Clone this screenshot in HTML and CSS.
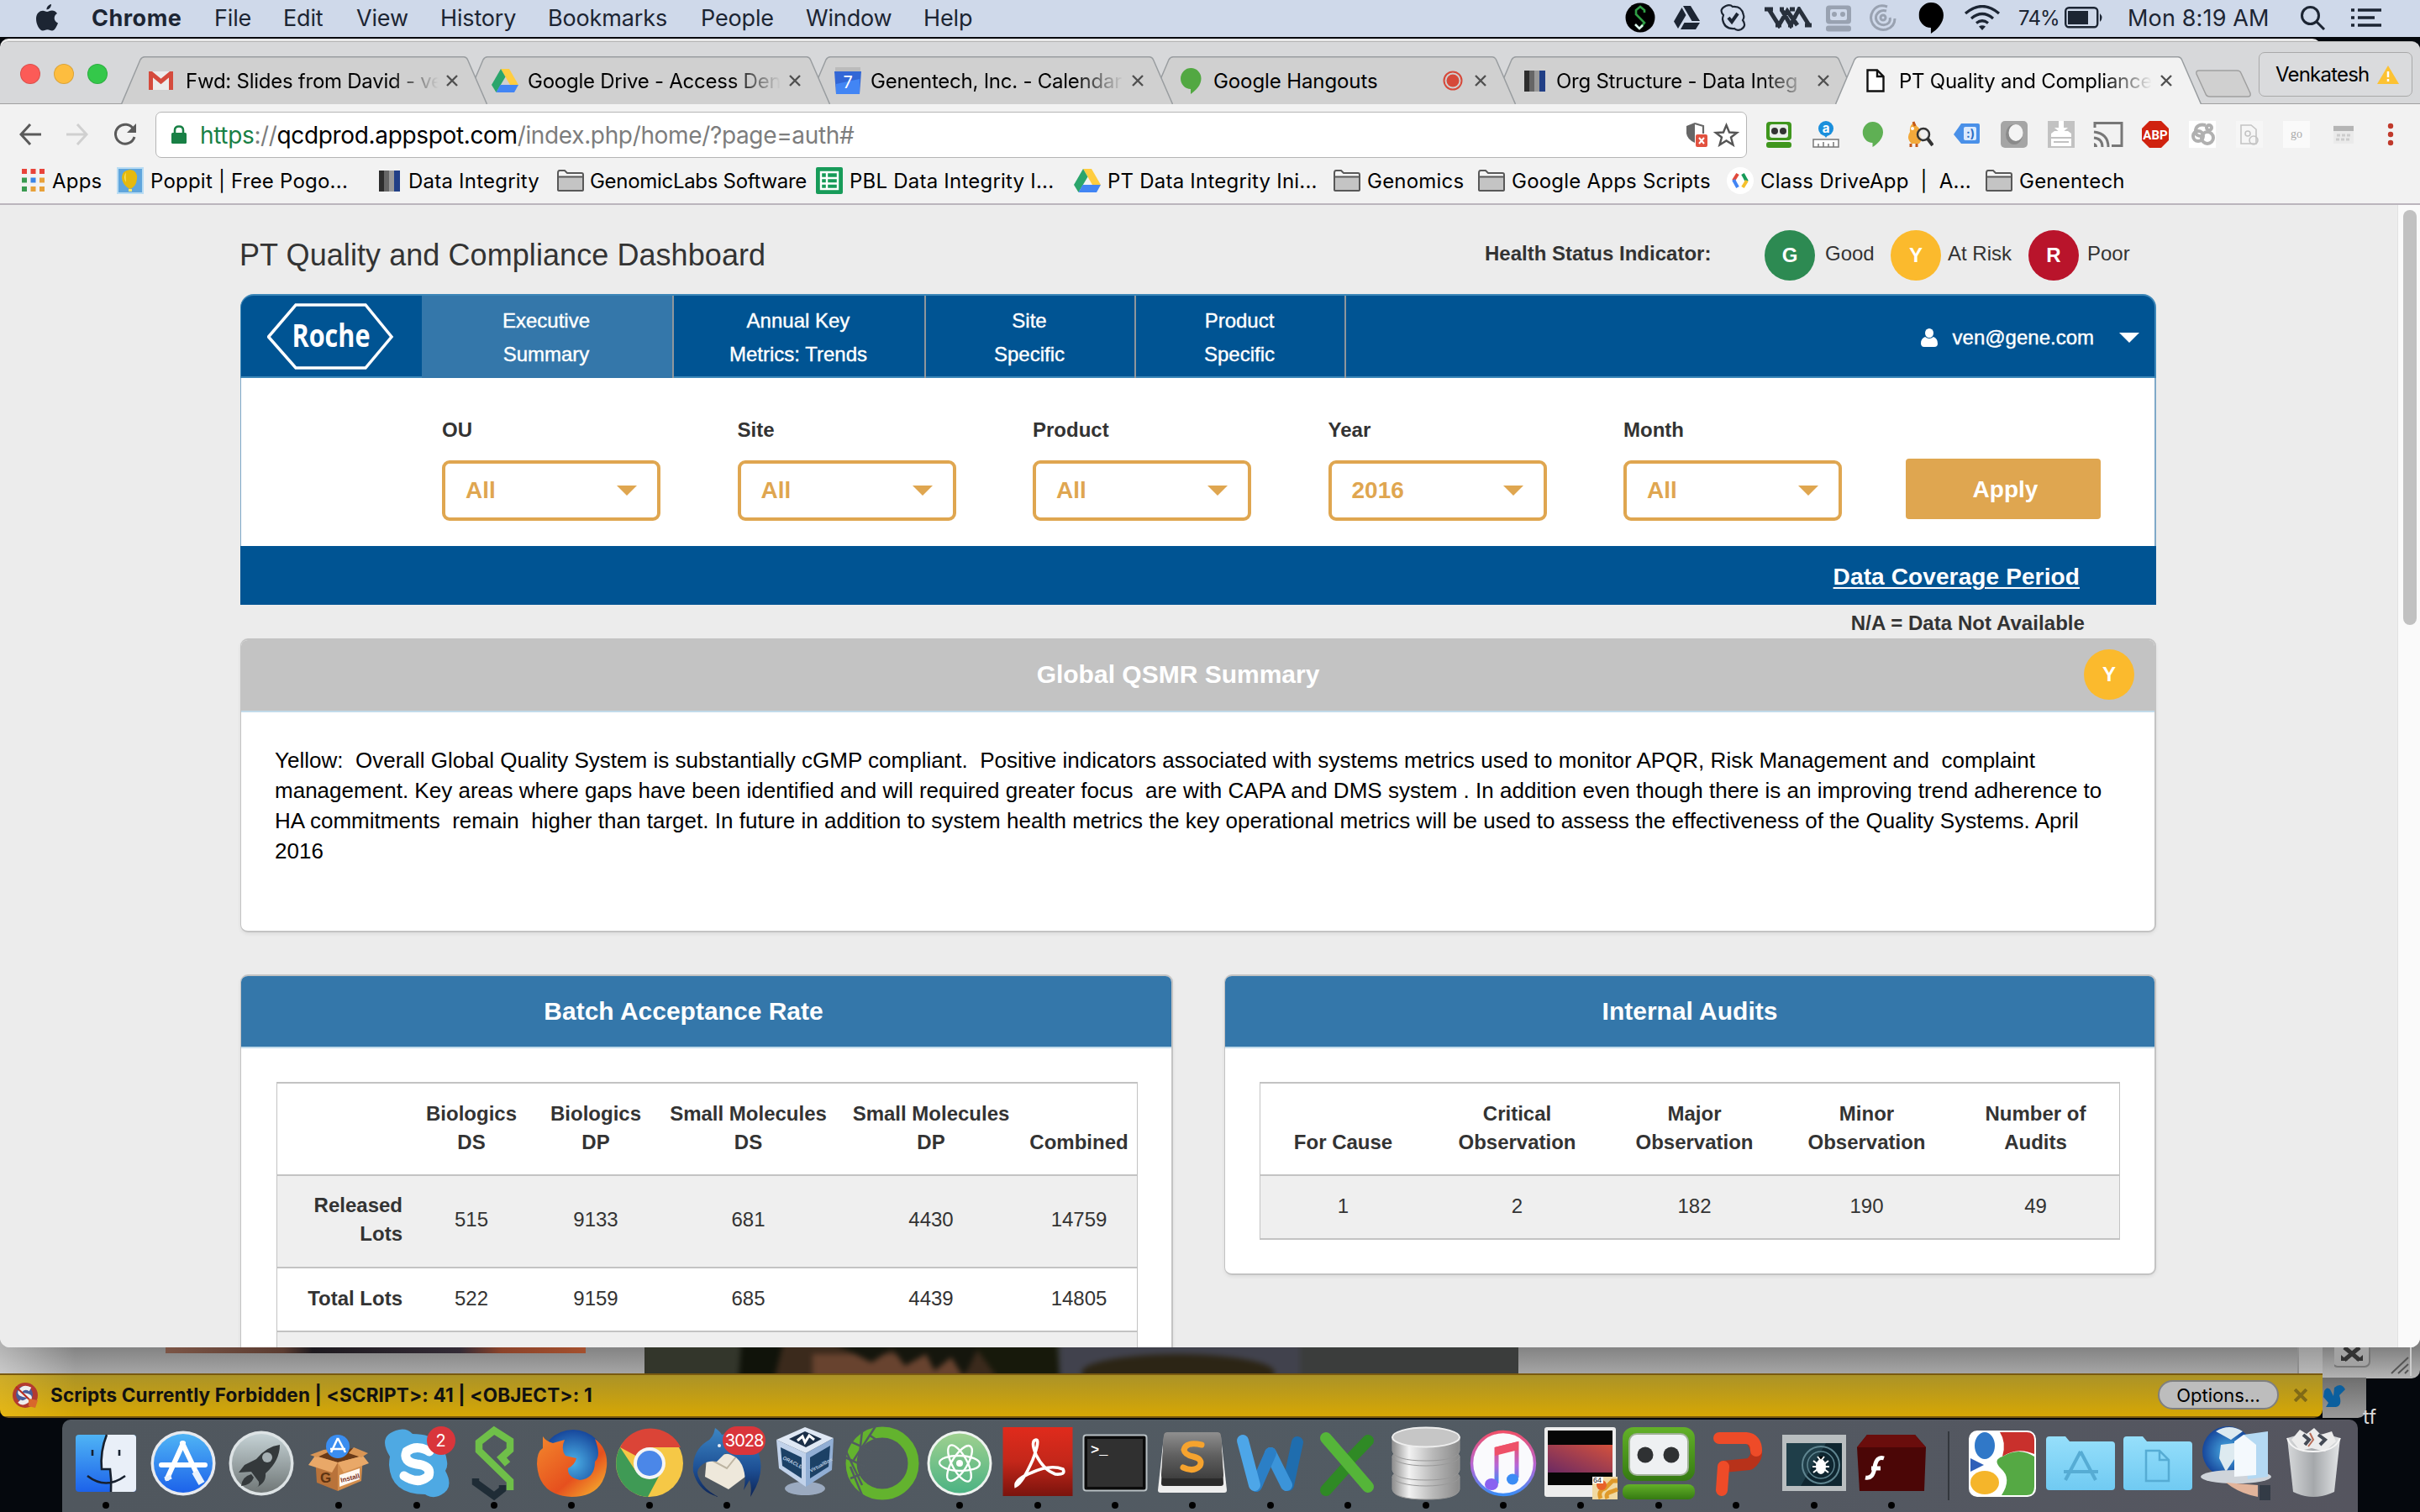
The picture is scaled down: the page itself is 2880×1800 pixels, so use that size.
FILE: index.html
```html
<!DOCTYPE html>
<html lang="en">
<head>
<meta charset="utf-8">
<title>PT Quality and Compliance Dashboard</title>
<link rel="stylesheet" href="styles.css">
</head>
<body>
<svg class="defs" width="0" height="0" aria-hidden="true">
  <defs>
    <linearGradient id="gBlue" x1="0" y1="0" x2="0" y2="1"><stop offset="0" stop-color="#4fb4f5"/><stop offset="1" stop-color="#1c62ea"/></linearGradient>
    <linearGradient id="gSilver" x1="0" y1="0" x2="0" y2="1"><stop offset="0" stop-color="#c5d2d5"/><stop offset="1" stop-color="#707777"/></linearGradient>
    <linearGradient id="gRed" x1="0" y1="0" x2="0" y2="1"><stop offset="0" stop-color="#e02b1c"/><stop offset=".5" stop-color="#c4271a"/><stop offset="1" stop-color="#7a130d"/></linearGradient>
    <linearGradient id="gAtom" x1="0" y1="0" x2="0" y2="1"><stop offset="0" stop-color="#9ed08f"/><stop offset="1" stop-color="#4cb383"/></linearGradient>
    <linearGradient id="gSub" x1="0" y1="0" x2="0" y2="1"><stop offset="0" stop-color="#8f8f8f"/><stop offset=".5" stop-color="#606060"/><stop offset="1" stop-color="#3f3f3f"/></linearGradient>
    <linearGradient id="gCyl" x1="0" y1="0" x2="1" y2="0"><stop offset="0" stop-color="#8d8d8d"/><stop offset=".25" stop-color="#f2f2f2"/><stop offset=".6" stop-color="#b9b9b9"/><stop offset="1" stop-color="#8a8a8a"/></linearGradient>
    <linearGradient id="gFolder" x1="0" y1="0" x2="0" y2="1"><stop offset="0" stop-color="#96dffb"/><stop offset="1" stop-color="#70caf2"/></linearGradient>
    <linearGradient id="gNote" x1="0" y1="0" x2="0" y2="1"><stop offset="0" stop-color="#f0506a"/><stop offset=".55" stop-color="#b566d8"/><stop offset="1" stop-color="#3b8cf5"/></linearGradient>
    <linearGradient id="gUbuntu" x1="0" y1="1" x2="1" y2="0"><stop offset="0" stop-color="#6b2a63"/><stop offset="1" stop-color="#d4513c"/></linearGradient>
    <linearGradient id="gGreen" x1="0" y1="0" x2="0" y2="1"><stop offset="0" stop-color="#63b128"/><stop offset="1" stop-color="#357a12"/></linearGradient>
    <linearGradient id="gFox" x1="0" y1="0" x2="1" y2="1"><stop offset="0" stop-color="#f3872c"/><stop offset=".6" stop-color="#e6501e"/><stop offset="1" stop-color="#f8c232"/></linearGradient>
    <linearGradient id="gBird" x1="0" y1="0" x2="0" y2="1"><stop offset="0" stop-color="#3c86c4"/><stop offset=".6" stop-color="#1d4f94"/><stop offset="1" stop-color="#0d2456"/></linearGradient>
    <radialGradient id="gGlobe"><stop offset="0" stop-color="#4bb0e6"/><stop offset="1" stop-color="#17479c"/></radialGradient>
    <linearGradient id="gTrash" x1="0" y1="0" x2="1" y2="0"><stop offset="0" stop-color="#d6d8da"/><stop offset=".5" stop-color="#a5a8ab"/><stop offset="1" stop-color="#e2e4e6"/></linearGradient>
    <symbol id="folder" viewBox="0 0 32 26"><path d="M1 24V4Q1 1 3 1H9L12 4H29Q31 4 31 6V24Q31 25 29 25H3Q1 25 1 24Z" fill="#f4f4f4" stroke="#585858" stroke-width="2"/><path d="M2 9H30V24H2Z" fill="#c4c4c4"/><path d="M1 8.500H31" stroke="#585858" stroke-width="2"/></symbol>
    <symbol id="drive" viewBox="0 0 32 28"><path d="M11 0H21L32 19H22Z" fill="#ffcd40"/><path d="M11 0L16.500 9.500 5.500 28 0 19Z" fill="#2ba56b"/><path d="M10.500 19H32L27 28H5.500Z" fill="#4285f4"/></symbol>
    <symbol id="close" viewBox="0 0 14 14"><path d="M1 1L13 13M13 1L1 13" stroke="#505050" stroke-width="2.400"/></symbol>
    <symbol id="bars" viewBox="0 0 25 25"><path d="M0 0H6V25H0Z" fill="#2d2d2d"/><path d="M6 0H12V25H6Z" fill="#666"/><path d="M12 0H18V25H12Z" fill="#999"/><path d="M18 0H25V25H18Z" fill="#213f86"/></symbol>
    <symbol id="bubble" viewBox="0 0 26 32"><path d="M13 0A12.500 13 0 0 1 25.500 13C25.500 21 19 28 12.500 32V26A12.700 13 0 0 1 13 0Z"/></symbol>
    <symbol id="tabshape" viewBox="0 0 436 57"><path d="M0.500 57L23 4Q25 .8 28 .8H408Q411 .8 412.500 4L435.500 57"/></symbol>
    <symbol id="robo" viewBox="0 0 32 32"><rect x="1" y="1" width="30" height="22" rx="4"/><rect x="1" y="25" width="30" height="7" rx="3"/></symbol>
  </defs>
</svg>

<div class="desktop">
  <header class="menubar">
    <svg class="mi" width="28" height="34" viewBox="0 0 28 34"><path fill="#1c2533" d="M19 1c.2 3-2.500 6.500-5.500 6.500C13.200 4.500 16 1.500 19 1ZM14 10c1.500 0 3-1.500 6-1.500 2 0 4.500 1 6 3.500-5 3-4 9.500 1 11.500-1.500 4-4 9-7 9-2 0-3-1.300-5.500-1.300S10.500 32.500 9 32.500C5 32.500 1 25 1 18.500 1 12 5 8.700 9 8.700c2.300 0 3.800 1.300 5 1.300Z"/></svg>
    <b>Chrome</b><span>File</span><span>Edit</span><span>View</span><span>History</span><span>Bookmarks</span><span>People</span><span>Window</span><span>Help</span>
    <svg width="36" height="36" viewBox="0 0 36 36"><ellipse cx="18" cy="18" rx="17.500" ry="17.500"/><path d="M13 15L13 9 18 5 23 9V12M13 14L23 24 19 29" fill="none" stroke="#2f9e44" stroke-width="2.600"/><path d="M12 26L17 31 21 27" fill="none" stroke="#dfe" stroke-width="2.600"/></svg>
    <svg width="32" height="28" viewBox="0 0 32 28" fill="#1c2533"><path d="M11 0H20L31 18H21.500ZM9.500 2L14.500 11 5 27 0 18.500ZM12.500 20H31L26 28H8Z"/></svg>
    <svg width="33" height="32" viewBox="0 0 33 32" fill="none" stroke="#1c2533" stroke-width="2.200"><path d="M8 2Q13 0 16 3 27 2 29 13 30 16 28 19 33 26 26 30 21 32 18 29 6 30 4 18 4 16 5 13 -1 6 8 2Z"/><path d="M11 16L15 21 22 11" stroke-width="4"/></svg>
    <svg width="56" height="26" viewBox="0 0 56 26" fill="none" stroke="#28303c" stroke-width="5"><path d="M0 3H10M18 3H23M30 3H36M5 3L17 22 27 5 39 22M20 3L31 22 41 3 53 22M13 22H20M28 22H34M48 22H56"/></svg>
    <svg width="32" height="33" viewBox="0 0 32 33" fill="#99a2b1"><use href="#robo"/><rect x="6" y="6" width="20" height="13" rx="2" fill="#cfd9ea"/><circle cx="11" cy="12" r="3"/><circle cx="21" cy="12" r="3"/></svg>
    <svg width="33" height="32" viewBox="0 0 33 32" fill="none" stroke="#99a2b1" stroke-width="3"><path d="M22 3Q11-1 5 8 0 16 5 24 11 32 21 30 31 27 31 17M21 8Q13 6 9 13 7 19 12 23 19 27 24 22 26 19 25 16"/><circle cx="17" cy="16" r="3"/></svg>
    <svg width="31" height="37" viewBox="0 0 26 32"><use href="#bubble"/></svg>
    <svg width="44" height="30" viewBox="0 0 44 30" fill="none" stroke="#1c2533" stroke-width="3.200"><path d="M2 10Q22-7 42 10M9 16Q22 5 35 16M15 21.500Q22 16 29 21.500"/><path d="M18 25.500Q22 23 26 25.500L22 30Z" fill="#1c2533" stroke="none"/></svg>
    <span class="pct">74%</span>
    <svg width="46" height="26" viewBox="0 0 46 26"><rect x="1.200" y="1.200" width="38" height="23" rx="4" fill="none" stroke="#1c2533" stroke-width="2.400"/><path d="M4 5H28V21H4ZM42 8Q47 13 42 18Z" fill="#1c2533"/></svg>
    <span class="clock">Mon 8:19 AM</span>
    <svg width="30" height="29" viewBox="0 0 30 29" fill="none" stroke="#1c2533" stroke-width="3"><circle cx="11.500" cy="11.500" r="10"/><path d="M18.500 18.500L28 28"/></svg>
    <svg width="37" height="22" viewBox="0 0 37 22" stroke="#1c2533" stroke-width="3.600"><path d="M0 2H4M8 2H36M0 11H4M8 11H28M0 20H4M8 20H36"/></svg>
  </header>

  <div class="backwin"></div>

  <section class="ff">
    <div class="ff-page">
      <div class="photo-a"></div>
      <svg class="photo-b" width="1040" height="31" viewBox="0 0 1040 31" preserveAspectRatio="none">
        <rect width="1040" height="31" fill="#31342a"/>
        <g class="soft"><path d="M0 -5H120V36H0Z" fill="#33362b"/><path d="M160 -5H480V36H150Z" fill="#3b2a1c"/><path d="M115 -5H165L155 36H112Z" fill="#10130a"/><path d="M200 8H380L385 36H200Z" fill="#68432f"/><path d="M225 -5H400L380 36 365 12 345 28 335 8 310 22 295 2 270 18Z" fill="#15160d"/><path d="M390 -5H490L494 36H420Z" fill="#17190b"/><path d="M494 -5H820L820 36H494Z" fill="#41424d"/><ellipse cx="635" cy="30" rx="115" ry="22" fill="#2c2515"/><path d="M780 -5H1045V36H780Z" fill="#3b3d3c"/></g>
      </svg>
      <div class="ff-scroll"></div>
    </div>
    <div class="ff-bar">
      <svg width="32" height="32" viewBox="0 0 32 32"><circle cx="16" cy="16" r="15" fill="#b33a30"/><circle cx="15" cy="15" r="10" fill="#4a5c98"/><path d="M22 9Q15 5 11 10T16 16 19 22 9 23" fill="none" stroke="#eee" stroke-width="5"/><path d="M5 6L26 26" stroke="#b8291e" stroke-width="2"/><path d="M20 20L31 22 28 31 20 29Z" fill="#d8682c"/></svg>
      <b>Scripts Currently Forbidden | &lt;SCRIPT&gt;: 41 | &lt;OBJECT&gt;: 1</b>
      <button class="ff-opt">Options...</button>
      <svg class="ff-x" width="16" height="16" viewBox="0 0 14 14"><path d="M1 1L13 13M13 1L1 13" stroke="#806a16" stroke-width="3.500"/></svg>
    </div>
  </section>
  <div class="sidewin"><svg width="100" height="34" viewBox="0 0 100 34"><rect x="-2" y="-12" width="44" height="35" rx="6" fill="#a2a2a2" stroke="#777" stroke-width="2"/><path d="M12 0L30 15M30 0L12 15" stroke="#333" stroke-width="5"/><path d="M8 16V9L16 16ZM34 16V9L26 16Z" fill="#333"/><path d="M68 31L88 12M76 31L88 20M84 31L88 27" stroke="#555" stroke-width="2"/><path d="M91 0V34" stroke="#ccc" stroke-width="2"/></svg></div>
  <div class="notewin"><svg width="30" height="30" viewBox="0 0 30 30"><path d="M2 8Q5 2 9 6L13 14 14 4Q22-3 27 6L20 13Q24 25 16 27H4L7 22 1 15Z" fill="#0b5f9e"/></svg></div>
  <span class="desk-label">tf</span>

  <main class="chrome">
    <div class="tabstrip">
      <div class="lights"><i class="r"></i><i class="y"></i><i class="g"></i></div>
      <div class="tabs">
        <div class="tab"><svg class="shape"><use href="#tabshape"/></svg>
          <svg class="fav gm" width="29" height="22" viewBox="0 0 29 22"><rect width="29" height="22" fill="#ececec"/><path d="M2.500 22V2L14.500 12 26.500 2V22" fill="none" stroke="#d54b3d" stroke-width="5"/></svg>
          <span class="t">Fwd: Slides from David - ve</span><svg class="x"><use href="#close"/></svg></div>
        <div class="tab"><svg class="shape"><use href="#tabshape"/></svg>
          <svg class="fav" width="32" height="28"><use href="#drive"/></svg>
          <span class="t">Google Drive - Access Den</span><svg class="x"><use href="#close"/></svg></div>
        <div class="tab"><svg class="shape"><use href="#tabshape"/></svg>
          <svg class="fav" width="32" height="32" viewBox="0 0 32 32"><path d="M1 0H31V6H1Z" fill="#bbb"/><path d="M0 5H32L30 32H2Z" fill="#3367d6"/><path d="M2 20L30 14V32H2Z" fill="#4285f4"/><text x="16" y="25" text-anchor="middle" class="cal">7</text></svg>
          <span class="t">Genentech, Inc. - Calendar</span><svg class="x"><use href="#close"/></svg></div>
        <div class="tab"><svg class="shape"><use href="#tabshape"/></svg>
          <svg class="fav hg" width="25" height="31" viewBox="0 0 26 32" fill="#52a842"><use href="#bubble"/></svg>
          <span class="t nf">Google Hangouts</span><svg class="rec" width="24" height="24" viewBox="0 0 24 24"><circle cx="12" cy="12" r="10.500" fill="none" stroke="#d6493a" stroke-width="2"/><circle cx="12" cy="12" r="7.500" fill="#d6493a"/></svg><svg class="x"><use href="#close"/></svg></div>
        <div class="tab"><svg class="shape"><use href="#tabshape"/></svg>
          <svg class="fav br" width="25" height="25"><use href="#bars"/></svg>
          <span class="t">Org Structure - Data Integ</span><svg class="x"><use href="#close"/></svg></div>
        <div class="tab active"><svg class="shape"><use href="#tabshape"/></svg>
          <svg class="fav pg" width="22" height="28" viewBox="0 0 22 28"><path d="M1.500 1.500H13L20.500 9V26.500H1.500ZM13 1.500V9H20.500" fill="#fff" stroke="#111" stroke-width="2.400"/></svg>
          <span class="t">PT Quality and Compliance</span><svg class="x"><use href="#close"/></svg></div>
      </div>
      <svg class="newtab" width="68" height="33" viewBox="0 0 68 33"><path d="M2 5Q1 1 5 1H50Q54 1 55 4L66 28Q67 32 63 32H18Q14 32 13 29Z" fill="#d0d0d0" stroke="#a0a0a0" stroke-width="1.500"/></svg>
      <div class="profile">Venkatesh<svg width="26" height="22" viewBox="0 0 26 22"><path d="M13 0L26 22H0Z" fill="#fcc233"/><path d="M13 7V14M13 16V19" stroke="#fff" stroke-width="2.500"/></svg></div>
    </div>

    <div class="toolbar">
      <svg width="26" height="26" viewBox="0 0 26 26" fill="none" stroke="#5a5a5a" stroke-width="3"><path d="M13 1L2 13 13 25M2 13H26"/></svg>
      <svg class="fwd" width="26" height="26" viewBox="0 0 26 26" fill="none" stroke="#d0d0d0" stroke-width="3"><path d="M13 1L24 13 13 25M24 13H0"/></svg>
      <svg class="rel" width="28" height="28" viewBox="0 0 28 28"><path d="M24 8A11.500 11.500 0 1 0 25 17" fill="none" stroke="#5a5a5a" stroke-width="3"/><path d="M27 1V12H16Z" fill="#5a5a5a"/></svg>
      <div class="omni">
        <svg width="18" height="22" viewBox="0 0 18 22"><rect y="9" width="18" height="13" rx="1.500" fill="#188045"/><path d="M4 10V6Q4 1.500 9 1.500T14 6V10" fill="none" stroke="#188045" stroke-width="2.600"/></svg>
        <span class="url"><em>https</em><i>://</i>qcdprod.appspot.com<i>/index.php/home/?page=auth#</i></span>
        <svg width="28" height="30" viewBox="0 0 28 30"><path d="M12 1L2 5V14Q3 21 12 25Z" fill="#666"/><path d="M12 2L22 5V14" fill="none" stroke="#666" stroke-width="2.200"/><rect x="13" y="15" width="14" height="15" rx="2" fill="#e2513f"/><path d="M17 19L23 26M23 19L17 26" stroke="#fff" stroke-width="2"/></svg>
        <svg class="star" width="31" height="29" viewBox="0 0 31 29"><path d="M15.500 3L19 11.500 28 12 21 17.500 23.500 26.500 15.500 21.500 7.500 26.500 10 17.500 3 12 12 11.500Z" fill="none" stroke="#555" stroke-width="2.400"/></svg>
      </div>
      <div class="exts">
        <svg viewBox="0 0 32 32" fill="#3f961d"><use href="#robo"/><rect x="5" y="4" width="22" height="16" rx="3" fill="#e8eee8"/><circle cx="11" cy="12" r="4" fill="#333"/><circle cx="21" cy="12" r="4" fill="#333"/></svg>
        <svg viewBox="0 0 32 32"><circle cx="16" cy="9" r="9" fill="#1a8fdc"/><path d="M10 12L16 20 22 12Z" fill="#1a8fdc"/><text x="16" y="14" text-anchor="middle" class="xa">a</text><path d="M1 22H31V31H1ZM7 31V27M13 31V25M19 31V27M25 31V25" fill="#fff" stroke="#777" stroke-width="1.500"/></svg>
        <svg viewBox="0 0 32 32" fill="#5fb054"><path d="M16 1A12 12.500 0 0 1 28 13.500C28 21 21 28 15.500 31V26A12 12.500 0 0 1 16 1Z"/></svg>
        <svg viewBox="0 0 32 32"><path d="M9 1L12 6Q17 9 16 15 20 22 15 27H6Q-1 21 4 13 3 6 9 1Z" fill="#f2a93b"/><path d="M8 1L10 6M5 27V31M12 27V31" stroke="#c2571a" stroke-width="3"/><circle cx="7" cy="9" r="2" fill="#fff"/><circle cx="20" cy="16" r="7" fill="#eee" fill-opacity=".8" stroke="#333" stroke-width="2.500"/><path d="M25 21L31 29" stroke="#333" stroke-width="4"/></svg>
        <svg viewBox="0 0 32 32"><path d="M0 16L9 3H29Q31 3 31 5V25Q31 27 29 27H9Z" fill="#4a90e8"/><rect x="12" y="7" width="15" height="16" rx="2" fill="#dceafd"/><text x="20" y="20" text-anchor="middle" class="xs">:)</text></svg>
        <svg viewBox="0 0 32 32"><rect width="32" height="32" rx="5" fill="#a5a5a5"/><ellipse cx="16" cy="16" rx="10" ry="12" fill="#8a8a8a"/><ellipse cx="18" cy="14" rx="8.500" ry="10" fill="#f4f4f4"/></svg>
        <svg viewBox="0 0 32 32"><rect width="32" height="32" fill="#c2c2c2"/><path d="M4 15L8 12H24L28 15V30H4ZM13 0H19V8H24L16 15 8 8H13Z" fill="#fff"/><path d="M4 20H28M7 25H25" stroke="#c2c2c2" stroke-width="2"/></svg>
        <svg class="cast" viewBox="0 0 36 32" fill="none" stroke="#777" stroke-width="3"><path d="M2 8V2.500H34V29.500H22M1 13Q18 15 18 31M1 20Q11 21 11 31"/><path d="M1 26Q5 27 5 31H1Z" fill="#777" stroke="none"/></svg>
        <svg viewBox="0 0 32 32"><path d="M9 0H23L32 9V23L23 32H9L0 23V9Z" fill="#d0220f"/><text x="16" y="22" text-anchor="middle" class="abp">ABP</text></svg>
        <svg viewBox="0 0 32 32"><rect width="32" height="32" fill="#fff"/><g fill="none" stroke="#b0b0b0" stroke-width="4"><path d="M20 5Q9 3 8 11T17 18"/><circle cx="11" cy="18" r="6"/><circle cx="22" cy="20" r="7"/><circle cx="24" cy="8" r="3"/></g></svg>
        <svg viewBox="0 0 32 32" fill="none" stroke="#c4c4c4" stroke-width="1.600"><rect width="32" height="32" fill="#f6f6f6" stroke="none"/><path d="M6 5H18L24 10V27H6Z"/><circle cx="21" cy="23" r="5"/><circle cx="14" cy="15" r="3"/></svg>
        <svg viewBox="0 0 32 32"><rect width="32" height="32" fill="#fafafa"/><text x="16" y="20" text-anchor="middle" class="go">go</text></svg>
        <svg viewBox="0 0 32 32"><rect x="4" y="5" width="24" height="22" fill="#eaeaea"/><path d="M4 6H28V12H4Z" fill="#b5b5b5"/><path d="M8 17H24M7 22H25" stroke="#ccc" stroke-width="3" stroke-dasharray="4 2"/></svg>
        <svg viewBox="0 0 32 32" fill="#c0392b"><circle cx="16" cy="6" r="3.200"/><circle cx="16" cy="16" r="3.200"/><circle cx="16" cy="26" r="3.200"/></svg>
      </div>
    </div>

    <nav class="bookmarks">
      <a><svg width="28" height="28" viewBox="0 0 28 28"><path d="M0 0H6V6H0ZM10.500 0H16.500V6H10.500ZM21 0H27V6H21Z" fill="#e8433a"/><path d="M0 10.500H6V16.500H0ZM0 21H6V27H0Z" fill="#3a9a50"/><path d="M10.500 10.500H16.500V16.500H10.500Z" fill="#3a85e8"/><path d="M21 10.500H27V16.500H21ZM10.500 21H16.500V27H10.500ZM21 21H27V27H21Z" fill="#e8a13a"/></svg>Apps</a>
      <a><svg width="32" height="32" viewBox="0 0 32 32"><rect width="32" height="32" fill="#b9dcf3"/><rect x="2" y="2" width="28" height="28" fill="#5fa5dc"/><path d="M16 3Q25 4 24 14T15 26Q6 20 6 12T16 3Z" fill="#e5b90e"/><path d="M11 6Q7 12 11 18Q10 10 11 6ZM14 26H18V29H14Z" fill="#fbe76a"/></svg>Poppit | Free Pogo...</a>
      <a class="w"><svg width="25" height="25"><use href="#bars"/></svg>Data Integrity</a>
      <a class="tight"><svg width="32" height="26"><use href="#folder"/></svg>GenomicLabs Software</a>
      <a><svg width="32" height="32" viewBox="0 0 32 32"><rect width="32" height="32" rx="2" fill="#179b59"/><path d="M6 6H26V26H6ZM6 13H26M6 19.500H26M13 6V26" fill="none" stroke="#fff" stroke-width="2.400"/></svg>PBL Data Integrity I...</a>
      <a><svg width="32" height="28"><use href="#drive"/></svg>PT Data Integrity Ini...</a>
      <a><svg width="32" height="26"><use href="#folder"/></svg>Genomics</a>
      <a><svg width="32" height="26"><use href="#folder"/></svg>Google Apps Scripts</a>
      <a><svg width="32" height="32" viewBox="0 0 32 32"><circle cx="16" cy="16" r="16" fill="#fff"/><g fill="none" stroke-width="4"><path d="M13 8L8 16" stroke="#e24a3b"/><path d="M8 15L13 24" stroke="#4285f4"/><path d="M19 8L24 17" stroke="#179b59"/><path d="M24 16L19 24" stroke="#f5c02c"/></g></svg>Class DriveApp&nbsp; |&nbsp; A...</a>
      <a><svg width="32" height="26"><use href="#folder"/></svg>Genentech</a>
    </nav>

    <div class="viewport">
      <div class="page">
        <div class="pagehead">
          <h1>PT Quality and Compliance Dashboard</h1>
          <div class="legend">
            <b>Health Status Indicator:</b>
            <i class="dot g">G</i><span>Good</span>
            <i class="dot y">Y</i><span>At Risk</span>
            <i class="dot r">R</i><span>Poor</span>
          </div>
        </div>

        <div class="nav">
          <div class="logo"><svg width="152" height="80" viewBox="0 0 152 80"><path d="M34 2H117L148 40 117 77H34L1.500 40Z" fill="none" stroke="#fff" stroke-width="3.500"/><text x="76" y="52" text-anchor="middle" textLength="93" lengthAdjust="spacingAndGlyphs" class="roche">Roche</text></svg></div>
          <a class="on">Executive<br>Summary</a><a>Annual Key<br>Metrics: Trends</a><a class="s">Site<br>Specific</a><a class="s">Product<br>Specific</a>
          <div class="user"><svg width="20" height="22" viewBox="0 0 20 22" fill="#fff"><ellipse cx="10" cy="5.500" rx="5" ry="5.500"/><path d="M5 10Q10 14 15 10 20 12 20 18 20 22 16 22H4Q0 22 0 18 0 12 5 10Z"/></svg><span>ven@gene.com</span><i class="caret"></i></div>
        </div>

        <div class="filters">
          <label>OU<span class="sel">All<i class="caret"></i></span></label>
          <label>Site<span class="sel">All<i class="caret"></i></span></label>
          <label>Product<span class="sel">All<i class="caret"></i></span></label>
          <label>Year<span class="sel">2016<i class="caret"></i></span></label>
          <label>Month<span class="sel">All<i class="caret"></i></span></label>
          <button class="apply">Apply</button>
        </div>
        <div class="coverage"><a>Data Coverage Period</a></div>
        <div class="na">N/A = Data Not Available</div>

        <section class="panel summary">
          <h2><span>Global QSMR Summary</span><i class="dot y">Y</i></h2>
          <p>Yellow:&nbsp; Overall Global Quality System is substantially cGMP compliant.&nbsp; Positive indicators associated with systems metrics used to monitor APQR, Risk Management and&nbsp; complaint<br>management. Key areas where gaps have been identified and will required greater focus&nbsp; are with CAPA and DMS system . In addition even though there is an improving trend adherence to<br>HA commitments&nbsp; remain&nbsp; higher than target. In future in addition to system health metrics the key operational metrics will be used to assess the effectiveness of the Quality Systems. April<br>2016</p>
        </section>

        <div class="two">
          <section class="panel batch">
            <h2><span>Batch Acceptance Rate</span></h2>
            <div class="grid">
              <div class="row head"><span></span><span>Biologics<br>DS</span><span>Biologics<br>DP</span><span>Small Molecules<br>DS</span><span>Small Molecules<br>DP</span><span>Combined</span></div>
              <div class="row alt tall"><b>Released<br>Lots</b><span>515</span><span>9133</span><span>681</span><span>4430</span><span>14759</span></div>
              <div class="row"><b>Total Lots</b><span>522</span><span>9159</span><span>685</span><span>4439</span><span>14805</span></div>
              <div class="row alt tall"></div>
            </div>
          </section>
          <section class="panel audits">
            <h2><span>Internal Audits</span></h2>
            <div class="grid">
              <div class="row head"><span>For Cause</span><span>Critical<br>Observation</span><span>Major<br>Observation</span><span>Minor<br>Observation</span><span>Number of<br>Audits</span></div>
              <div class="row alt"><span>1</span><span>2</span><span>182</span><span>190</span><span>49</span></div>
            </div>
          </section>
        </div>
      </div>
      <div class="scroll"><div class="thumb"></div></div>
    </div>
  </main>

  <footer class="dock">
    <!-- Finder -->
    <div class="app run"><svg viewBox="0 0 92 110"><path d="M10 22Q10 18 14 18H78Q82 18 82 22V82Q82 86 78 86H14Q10 86 10 82Z" fill="url(#gBlue)"/><path d="M47 18H78Q82 18 82 22V82Q82 86 78 86H52Q53 72 51 59H41Q39 38 47 18Z" fill="#e9eff8"/><path d="M47 18Q39 38 41 59H51Q53 72 52 86M30 36V43M62 36V43M24 67Q46 84 69 67" fill="none" stroke="#17202e" stroke-width="2.600"/></svg></div>
    <!-- App Store -->
    <div class="app"><svg viewBox="0 0 92 110"><circle cx="46" cy="52" r="38.500" fill="#e8eaee"/><circle cx="46" cy="52" r="35" fill="url(#gBlue)"/><path d="M46 28L27 70M45 28L63 66M20 54H72" stroke="#fff" stroke-width="6" stroke-linecap="round"/><path d="M29 72L27 67M60 62L68 76" stroke="#e8f2fd" stroke-width="8"/></svg></div>
    <!-- Launchpad -->
    <div class="app"><svg viewBox="0 0 92 110"><circle cx="46" cy="52" r="38.500" fill="#dde3e5"/><circle cx="46" cy="52" r="35" fill="url(#gSilver)"/><path d="M68 30Q52 32 40 47L26 54 19 63 34 62 43 74Q44 80 39 81 52 76 51 64 68 49 68 30Z" fill="#34393b"/><circle cx="53" cy="45" r="6" fill="#a5afb2"/><path d="M34 65Q23 68 22 79 34 78 37 69Z" fill="#34393b"/></svg></div>
    <!-- Installer -->
    <div class="app run"><svg viewBox="0 0 92 110"><path d="M18 43L45 50V85L20 75Z" fill="#b9733a"/><path d="M45 50L75 43 73 73 45 85Z" fill="#d28d4d"/><path d="M18 43L30 36 46 40 62 34 75 43 45 51Z" fill="#6a3a18"/><path d="M18 43L45 51 38 63 10 54ZM45 51L75 43 82 52 52 63Z" fill="#e9a868"/><path d="M12 42L28 36 44 34 20 45ZM64 33L81 40 73 45 58 40Z" fill="#d99554"/><circle cx="45" cy="32" r="14" fill="#3a8df0"/><path d="M45 22L37 39M45 22L54 39M36 35H54" stroke="#fff" stroke-width="2.500"/><path d="M47 66L71 58V71L47 80Z" fill="#fff8f2"/><text x="49" y="75" class="inst" transform="rotate(-14 49 75)">Install</text><text x="24" y="75" class="boxg">G</text></svg></div>
    <!-- Skype -->
    <div class="app run"><svg viewBox="0 0 92 110"><path d="M25 12Q34 10 41 17 78 17 82 50 83 56 80 61 92 83 72 91 64 94 56 89 15 89 13 54 13 49 14 44-2 18 25 12Z" fill="#4ea9e3"/><path d="M61 38Q46 29 34 38 29 50 46 53 64 55 60 67 48 78 31 67" fill="none" stroke="#fff" stroke-width="11" stroke-linecap="round"/></svg><em>2</em></div>
    <!-- Green hook -->
    <div class="app run"><svg viewBox="0 0 92 110" fill="none" stroke-width="8.500"><path d="M62 53L55 45 65 36V25L46 13 28 27V37L65 73V84" stroke="#6fbf49"/><path d="M24 70V75L46 91 56 83V78" stroke="#1f2c36"/></svg></div>
    <!-- Firefox -->
    <div class="app run"><svg viewBox="0 0 92 110"><circle cx="48" cy="51" r="39" fill="url(#gGlobe)"/><path d="M12 20Q16 26 24 28L38 24Q33 35 39 43L52 46Q50 54 42 58 41 69 56 72 74 70 74 50 82 43 74 23 90 35 88 56 84 92 46 92 7 90 5 53 5 38 12 34Z" fill="url(#gFox)"/></svg></div>
    <!-- Chrome -->
    <div class="app run"><svg viewBox="0 0 92 110"><circle cx="46" cy="52" r="40" fill="#f6c846"/><path d="M46 52L11 33A40 40 0 0 1 83 33H46Z" fill="#db4437"/><path d="M11 33A40 40 0 0 0 44 92L60 62 30 62Z" fill="#3f9a55"/><circle cx="46" cy="52" r="19" fill="#f5f5f5"/><circle cx="46" cy="52" r="15" fill="#4b87e8"/></svg></div>
    <!-- Thunderbird -->
    <div class="app run"><svg viewBox="0 0 92 110"><path d="M22 45L62 38 76 62 48 83 20 68Z" fill="#eee8db"/><path d="M22 45L46 58 62 38" fill="none" stroke="#bdb4a2" stroke-width="2"/><path d="M32 10Q38 14 40 18 64 12 82 36 94 62 74 92 76 80 73 72L66 84Q70 68 64 54 58 42 44 40L34 50Q22 48 14 56 8 62 14 72 20 84 36 92 12 86 6 62 4 38 22 26 30 22 32 10Z" fill="url(#gBird)"/><circle cx="37" cy="31" r="2" fill="#e9eef5"/></svg><em class="wide">3028</em></div>
    <!-- VirtualBox -->
    <div class="app"><svg viewBox="0 0 92 110"><ellipse cx="46" cy="82" rx="24" ry="8" fill="#9baac0"/><path d="M12 24L46 9 80 22 47 40Z" fill="#dfe8f4"/><path d="M27 23L46 14 66 23 47 33Z" fill="#1b2f48"/><path d="M37 25L43 20 46 27 51 19 57 24" fill="none" stroke="#fff" stroke-width="3"/><path d="M12 24L47 40V80L15 58Z" fill="#c1d2ea"/><path d="M80 22L47 40V80L78 60Z" fill="#91aed4"/><path d="M17 33L42 45V70L19 55Z" fill="#1c4166"/><path d="M76 31L52 45V70L74 56Z" fill="#1c4166"/><text x="19" y="47" class="vb" transform="rotate(27 19 47)">ORACLE</text><text x="53" y="63" class="vb" transform="rotate(-29 53 63)">VirtualBox</text></svg></div>
    <!-- Anaconda -->
    <div class="app"><svg viewBox="0 0 92 110"><circle cx="46" cy="52" r="37" fill="none" stroke="#63b32e" stroke-width="13"/><path d="M8 26L34 38M2 45L26 56M8 70L34 60M22 13L18 50M3 38L22 78M22 90L8 56M38 8L12 48M30 18L42 26" stroke="#525a62" stroke-width="2.500"/></svg></div>
    <!-- Atom -->
    <div class="app run"><svg viewBox="0 0 92 110"><circle cx="46" cy="52" r="38.500" fill="#eef3ef"/><circle cx="46" cy="52" r="35.500" fill="url(#gAtom)"/><g fill="none" stroke="#fff" stroke-width="2.400"><ellipse cx="46" cy="52" rx="9" ry="24" transform="rotate(-28 46 52)"/><ellipse cx="46" cy="52" rx="9" ry="24" transform="rotate(32 46 52)"/><ellipse cx="46" cy="52" rx="9" ry="24" transform="rotate(92 46 52)"/></g><circle cx="46" cy="52" r="4" fill="#fff"/></svg></div>
    <!-- Acrobat -->
    <div class="app run"><svg viewBox="0 0 92 110"><rect x="4.500" y="9" width="83" height="82" fill="url(#gRed)"/><path d="M20 79Q28 75 40 48 49 24 44 24 37 25 44 42 53 60 67 65 80 66 76 59 61 53 39 63 19 71 20 79Z" fill="none" stroke="#fff" stroke-width="3.600"/></svg></div>
    <!-- Terminal -->
    <div class="app run"><svg viewBox="0 0 92 110"><rect x="8.500" y="18.500" width="75" height="66" rx="3" fill="#0b0b0b" stroke="#b8c0c4" stroke-width="2"/><rect x="13" y="23" width="66" height="57" fill="#303030"/><text x="17" y="41" class="term">&gt;_</text></svg></div>
    <!-- Sublime -->
    <div class="app run"><svg viewBox="0 0 92 110"><path d="M12 20H80L87 84Q87 87 84 87H8Q5 87 5 84Z" fill="#eee"/><path d="M16 15H76Q80 15 80 19L83 76Q83 79 80 79H12Q9 79 9 76L12 19Q12 15 16 15Z" fill="#2b2b2b"/><path d="M16 15H76Q80 15 80 19L83 66Q83 70 79 70H13Q9 70 9 66L12 19Q12 15 16 15Z" fill="url(#gSub)"/><path d="M57 30Q38 26 36 36 37 42 47 44 59 47 55 55 48 63 35 57" fill="none" stroke="#f6a32e" stroke-width="7" stroke-linecap="round"/></svg></div>
    <!-- Word -->
    <div class="app run"><svg viewBox="0 0 92 110" fill="none" stroke-width="14" stroke-linecap="round" stroke-linejoin="round"><path d="M78 27L67 78" stroke="#1f6dae"/><path d="M46 40L65 78" stroke="#3b94d9"/><path d="M29 79L46 40" stroke="#2b7fc6"/><path d="M13 25L27 78" stroke="#4da6e8"/></svg></div>
    <!-- Excel -->
    <div class="app run"><svg viewBox="0 0 92 110" fill="none" stroke-width="14" stroke-linecap="round"><path d="M70 25L46 50M46 55L20 84" stroke="#2f8a25"/><path d="M20 22L46 52L70 80" stroke="#55b539"/></svg></div>
    <!-- Database -->
    <div class="app run"><svg viewBox="0 0 92 110"><g fill="url(#gCyl)" stroke="#999" stroke-width="1"><path d="M6 68V83Q8 95 46 95T86 83V68Z"/><ellipse cx="46" cy="68" rx="40" ry="11"/><path d="M6 44V60Q8 72 46 72T86 60V44Z"/><ellipse cx="46" cy="44" rx="40" ry="11"/><path d="M6 20V37Q8 49 46 49T86 37V20Z"/></g><ellipse cx="46" cy="21" rx="40" ry="11.500" fill="#c6c6c6" stroke="#eee" stroke-width="2"/></svg></div>
    <!-- iTunes -->
    <div class="app run"><svg viewBox="0 0 92 110"><circle cx="46" cy="52" r="37.500" fill="#fafafd" stroke="url(#gNote)" stroke-width="3.500"/><path d="M38 76V35L62 29V69" fill="none" stroke="url(#gNote)" stroke-width="5"/><path d="M36 33L64 26V36L36 43Z" fill="#ee5068"/><ellipse cx="32" cy="77" rx="8" ry="7" fill="#8a62f0"/><ellipse cx="57" cy="71" rx="7" ry="6.500" fill="#3b8cf5"/></svg></div>
    <!-- Virtual machine window -->
    <div class="app run"><svg viewBox="0 0 92 110"><rect x="3" y="9" width="85" height="83" rx="3" fill="#ededed"/><rect x="7" y="13" width="77" height="65" fill="#060606"/><rect x="7" y="30" width="77" height="33" fill="url(#gUbuntu)"/><rect x="60" y="68" width="30" height="27" fill="#f0d9a2"/><path d="M70 94Q66 85 75 82L84 73H90M78 94Q75 88 82 86L90 83" fill="none" stroke="#df9a2a" stroke-width="5"/><circle cx="71" cy="78" r="6" fill="#e8622a"/><rect x="60" y="68" width="13" height="8" fill="#fff"/><text x="61" y="75" class="tiny">64</text></svg></div>
    <!-- RoboForm -->
    <div class="app run"><svg viewBox="0 0 92 110"><rect x="3" y="9" width="86" height="64" rx="13" fill="url(#gGreen)"/><rect x="3" y="77" width="86" height="18" rx="8" fill="url(#gGreen)"/><rect x="11" y="17" width="70" height="49" rx="9" fill="#eef0f2" stroke="#9fb096" stroke-width="2"/><circle cx="30" cy="42" r="9.500" fill="#2f3133"/><circle cx="61" cy="42" r="9.500" fill="#2f3133"/></svg></div>
    <!-- PowerPoint -->
    <div class="app run"><svg viewBox="0 0 92 110" fill="none" stroke-width="14" stroke-linecap="round" stroke-linejoin="round"><path d="M66 27Q76 43 62 53L31 56" stroke="#b8321a"/><path d="M26 22H58Q70 23 70 37M31 56L29 84" stroke="#ee4b28"/></svg></div>
    <!-- Debugger -->
    <div class="app run"><svg viewBox="0 0 92 110"><rect x="8" y="18" width="76" height="67" fill="#b9bec0"/><rect x="13" y="28" width="66" height="51" fill="#0f2630"/><path d="M13 28H60L30 79H13Z" fill="#1f3e49"/><circle cx="54" cy="54" r="22" fill="none" stroke="#5f8590" stroke-width="2"/><circle cx="54" cy="54" r="16" fill="none" stroke="#5f8590" stroke-width="1.500"/><ellipse cx="54" cy="56" rx="6" ry="9" fill="#fff"/><path d="M45 49L63 63M63 49L45 63M44 56H64M50 44L54 49 58 44" stroke="#fff" stroke-width="2"/></svg></div>
    <!-- Flash -->
    <div class="app run"><svg viewBox="0 0 92 110"><path d="M17 18H74L87 33 85 85H8L5 33Z" fill="#4b0606"/><path d="M17 18H74L87 33H5Z" fill="#6a0d0c"/><path d="M37 46Q28 43 26 57T15 69M22 58H33" fill="none" stroke="#fff" stroke-width="5"/></svg></div>
    <div class="sep"></div>
    <!-- Google -->
    <div class="app"><svg viewBox="0 0 92 110"><rect x="6" y="13" width="80" height="79" rx="10" fill="#fff"/><path d="M43 15H75Q84 15 84 24V41Q64 32 46 44Q51 27 43 15Z" fill="#c9302c"/><path d="M84 44V80Q84 90 75 90H45Q58 70 44 58 34 48 46 44 66 32 84 44Z" fill="#55a944"/><ellipse cx="25" cy="31" rx="12" ry="16" fill="#3078c8"/><path d="M8 46L24 54 8 62Z" fill="#3060b8"/><ellipse cx="25" cy="75" rx="17" ry="14" fill="#f5b52a"/></svg></div>
    <div class="app"><svg viewBox="0 0 92 110"><path d="M5 24Q5 20 9 20H28L33 26H83Q87 26 87 30V80Q87 84 83 84H9Q5 84 5 80Z" fill="url(#gFolder)"/><path d="M46 38L28 72M46 38L64 72M26 62H67" stroke="#56acd4" stroke-width="4"/></svg></div>
    <div class="app"><svg viewBox="0 0 92 110"><path d="M5 24Q5 20 9 20H28L33 26H83Q87 26 87 30V80Q87 84 83 84H9Q5 84 5 80Z" fill="url(#gFolder)"/><path d="M32 37H48L59 48V73H32ZM48 37V48H59" fill="none" stroke="#56acd4" stroke-width="2.500"/></svg></div>
    <!-- Network -->
    <div class="app"><svg viewBox="0 0 92 110"><circle cx="36" cy="38" r="30" fill="url(#gGlobe)"/><path d="M22 14Q38 4 54 14L40 24ZM28 30L44 28 46 44 34 62 26 46Z" fill="#ddeaf0"/><ellipse cx="46" cy="68" rx="42" ry="8" fill="#cfd4da"/><path d="M55 18L84 14V68L60 71Z" fill="#b4d9f3"/><path d="M44 26L55 18 70 30V66L44 68Z" fill="#f4f9fd"/><path d="M34 75L72 78V92Q50 88 34 75Z" fill="#e2b49b"/><rect x="74" y="78" width="13" height="18" fill="#333b46"/></svg></div>
    <!-- Trash -->
    <div class="app"><svg viewBox="0 0 92 110"><path d="M15 22Q46 12 78 22L71 86Q46 98 22 86Z" fill="url(#gTrash)"/><path d="M20 24L30 12 38 17 47 10 55 18 68 14 73 26 60 38 44 34 30 37Z" fill="#ececec"/><path d="M34 18L41 24 36 30M52 18L60 24 54 30" fill="none" stroke="#454b56" stroke-width="4"/><path d="M42 16L46 24 40 32" fill="none" stroke="#b76b55" stroke-width="2"/><path d="M15 22Q20 38 46 38T78 22" fill="none" stroke="#f5f5f5" stroke-width="2"/></svg></div>
  </footer>
</div>
</body>
</html>
```

FILE: styles.css
```css
* { box-sizing: border-box; }
body { margin: 0; font-family: "Liberation Sans", Arial, sans-serif; }
i, em { font-style: normal; }
svg { display: block; flex: none; }
.defs { position: absolute; }

.desktop { position: relative; width: 2880px; height: 1800px; overflow: hidden; background: #05080d; }

/* menu bar */
.menubar {
  display: grid; align-items: center; height: 44px; padding-left: 42px; background: #cfd9ea; color: #1c2533;
  grid-template-columns: 67px 146px 82px 87px 100px 128px 182px 125px 140px 835px 58px 54px 54px 72px 52px 59px 54px 65px 55px 75px 206px 60px 60px;
  font: 27px/44px Inter, sans-serif; letter-spacing: -.15px; white-space: nowrap;
}
.menubar svg { margin-top: -2px; }
.menubar b { letter-spacing: .5px; }
.menubar .pct { font-size: 24px; letter-spacing: -.8px; }
.menubar .clock { letter-spacing: .15px; }

.backwin { position: absolute; left: 0; top: 46px; width: 2762px; height: 20px; background: #e9e9e9; border-radius: 10px 10px 0 0; }

/* Chrome window */
.chrome {
  position: absolute; left: 0; top: 49px; width: 2880px; height: 1555px; overflow: hidden;
  display: flex; flex-direction: column; background: #f2f2f2; border-top: 1px solid #b4b4b4;
  border-radius: 10px 10px 12px 12px; font-family: Inter, sans-serif;
}
.tabstrip { position: relative; display: flex; height: 74px; background: #d7d8da; border-bottom: 1px solid #a0a0a0; }
.lights { display: flex; gap: 16px; width: 144px; padding: 26px 0 0 24px; }
.lights i { width: 24px; height: 24px; border-radius: 50%; border: 1px solid #0002; }
.lights .r { background: #fc5b57; }
.lights .y { background: #fdbd3f; }
.lights .g { background: #34c84a; }
.tabs { display: flex; padding-top: 17px; }
.tab { position: relative; display: flex; align-items: center; width: 408px; height: 57px; padding: 1px 7px 0 33px; font-size: 24px; letter-spacing: -.25px; }
.tab:nth-child(1) { z-index: 5; }
.tab:nth-child(2) { z-index: 4; }
.tab:nth-child(3) { z-index: 3; }
.tab:nth-child(4) { z-index: 2; }
.tab:nth-child(5) { z-index: 1; }
.tab.active { z-index: 9; }
.shape { position: absolute; left: 0; top: 0; width: 436px; height: 57px; z-index: -1; fill: #d0d0d0; stroke: #999da0; stroke-width: 1.5px; }
.active .shape { fill: #f2f2f2; }
.fav { margin-right: 11px; }
.fav.gm { margin-right: 15px; }
.fav.hg { margin: 0 14px 0 4px; }
.fav.br { margin: 0 13px 0 5px; }
.fav.pg { margin: 0 17px 0 4px; }
.cal { font: 20px Inter, sans-serif; fill: #fff; stroke: none; }
.tab .t { width: 304px; overflow: hidden; white-space: nowrap; -webkit-mask-image: linear-gradient(90deg, #000 80%, transparent 99%); mask-image: linear-gradient(90deg, #000 80%, transparent 99%); }
.tab .t.nf { width: 273px; -webkit-mask-image: none; mask-image: none; letter-spacing: -.1px; }
.tab .x { width: 14px; height: 14px; margin-left: auto; }
.newtab { margin: 33px 8px 0 20px; }
.profile {
  display: flex; align-items: center; gap: 10px; width: 183px; height: 53px; margin-top: 12px; padding-left: 19px;
  border: 1.5px solid #a9a9a9; border-radius: 7px; background: #dadbdd; font-size: 24px; letter-spacing: -.8px;
}

.toolbar { display: flex; align-items: center; height: 72px; padding-left: 23px; }
.toolbar .fwd { margin-left: 30px; }
.toolbar .rel { margin-left: 30px; }
.omni { display: flex; align-items: center; width: 1894px; height: 55px; margin-left: 22px; padding: 0 8px 0 18px; background: #fff; border: 1.5px solid #b5b5b5; border-radius: 7px; }
.url { flex: 1; margin-left: 16px; padding-top: 1px; font-size: 28px; letter-spacing: -.35px; }
.url em { color: #188045; }
.url i { color: #7d7d7d; }
.star { margin-left: 6px; }
.exts { display: flex; gap: 24px; margin-left: 22px; }
.exts svg { width: 32px; height: 32px; }
.exts .cast { width: 36px; margin: 0 -2px; }
.xa { font: bold 15px Inter, sans-serif; fill: #fff; }
.xs { font: bold 14px Inter, sans-serif; fill: #2a6cc4; }
.abp { font: bold 15px Roboto, sans-serif; fill: #fff; }
.go { font: 14px "Liberation Serif", serif; fill: #aaa; }

.bookmarks {
  display: grid; align-items: center; height: 48px; padding: 0 0 8px 26px; border-bottom: 2px solid #bbb5bd;
  grid-template-columns: 113px 312px 212px 308px 307px 309px 172px 296px 308px 200px;
  font-size: 24px; letter-spacing: .22px; white-space: nowrap;
}
.bookmarks a { display: flex; align-items: center; gap: 8px; }
.bookmarks .w { gap: 10px; }
.bookmarks .tight { letter-spacing: -.3px; gap: 7px; }

/* page */
.viewport { flex: 1; display: flex; background: #ececec; font-family: "Liberation Sans", Arial, sans-serif; color: #333; overflow: hidden; }
.page { width: 2280px; margin-left: 286px; }
.scroll { width: 27px; margin-left: auto; padding: 6px 0 0 6px; background: #fafafa; border-left: 1px solid #e2e2e2; }
.thumb { width: 16px; height: 494px; border-radius: 8px; background: #c1c1c1; }

.pagehead { display: flex; justify-content: space-between; align-items: center; height: 106px; padding-top: 13px; }
h1 { margin: 0 0 0 -1px; font-size: 36px; font-weight: 400; letter-spacing: .07px; }
.legend { display: flex; align-items: center; font-size: 24px; width: 799px; }
.legend b { width: 333px; padding-bottom: 4px; }
.legend span { width: 78px; padding-bottom: 4px; margin-left: 12px; }
.legend .dot.y + span { width: 84px; margin-left: 8px; }
.legend .dot.r { margin-left: 12px; }
.legend .dot.r + span { margin-left: 10px; }
.dot { display: block; width: 60px; height: 60px; flex: none; border-radius: 50%; text-align: center; font: bold 24px/60px "Liberation Sans", Arial, sans-serif; color: #fff; }
.dot.g { background: #2d8a52; }
.dot.y { background: #fbba2d; }
.dot.r { background: #b9142b; }

.nav { display: flex; height: 100px; border: 2px solid #3d87b8; border-width: 2px 2px 2px 1px; border-radius: 16px 16px 0 0; background: #005493; color: #fff; font-size: 24px; line-height: 40px; text-align: center; }
.nav .logo { width: 215px; padding: 9px 0 0 31px; }
.roche { font: bold 38px "Open Sans", sans-serif; fill: #fff; }
.nav a { width: 300px; height: 98px; padding: 10px 2px 0 0; border-right: 2px solid #8e969c; -webkit-text-stroke: .4px #fff; }
.nav a.s { width: 250px; }
.nav a.on { background: #3477aa; }
.nav .user { display: flex; align-items: center; margin-left: auto; padding: 4px 18px 0 0; -webkit-text-stroke: .4px #fff; }
.nav .user span { margin: 0 30px 0 18px; }
.caret { border: solid transparent; border-width: 12px 12px 0; border-top-color: currentColor; }

.filters { display: flex; gap: 91.500px; height: 200px; padding: 48px 0 0 239px; background: #fff; border: solid #7fa9c8; border-width: 0 2px 0 1px; font-weight: bold; font-size: 24px; line-height: 28px; }
.filters label { display: block; width: 260px; }
.sel { display: flex; align-items: center; justify-content: space-between; width: 260px; height: 72px; margin-top: 22px; padding: 0 24px 0 24px; border: 4px solid #dfa650; border-radius: 9px; color: #dfa650; font-size: 28px; }
.apply { width: 232px; height: 72px; margin: 48px 0 0 -16px; padding: 2px 6px 0 12px; border: 0; border-radius: 4px; background: #dfa650; color: #fff; font: bold 28px "Liberation Sans", Arial, sans-serif; }
.coverage { height: 70px; padding-right: 91px; background: #005493; color: #fff; font: bold 28px/73px "Liberation Sans", Arial, sans-serif; letter-spacing: .12px; text-align: right; text-decoration: underline; text-underline-offset: 3px; text-decoration-thickness: 2px; }
.na { height: 40px; padding-right: 85px; font: bold 24px/43px "Liberation Sans", Arial, sans-serif; letter-spacing: .06px; text-align: right; }

.panel { background: #fff; border: 2px solid #c3c3c3; border-width: 2px 2px 2px 1px; border-radius: 9px; overflow: hidden; box-shadow: 0 2px 4px #0001; }
.panel h2 { display: flex; align-items: center; height: 86px; margin: 0; border-bottom: 2px solid #c2dbea; background: #3477aa; color: #fff; font-size: 30px; }
.panel h2 span { flex: 1; text-align: center; }
.summary { height: 350px; }
.summary h2 { background: #c3c3c3; padding: 0 24px 2px 0; }
.summary h2 span { padding-left: 37px; }
.summary p { margin: 39px 0 0 40px; font-size: 26px; line-height: 36px; letter-spacing: .014px; color: #000; white-space: nowrap; }

.two { display: flex; justify-content: space-between; align-items: flex-start; margin-top: 50px; }
.two .panel { width: 1109px; padding-bottom: 40px; }
.two .batch { width: 1110px; }
.batch h2 { padding-right: 54px; }
.grid { margin: 40px 41px 0; border: 2px solid #c3c3c3; border-width: 2px 1px 0; font-size: 24px; line-height: 34px; text-align: center; }
.batch .grid { margin-right: 40px; margin-left: 42px; }
.row { display: grid; align-items: center; height: 76px; padding-bottom: 3px; border-bottom: 2px solid #c3c3c3; }
.row.head { height: 110px; padding-bottom: 21px; align-items: end; font-weight: bold; }
.row.tall { height: 110px; padding-bottom: 4px; }
.row.alt { background: #efefef; }
.batch .row { grid-template-columns: 166px 130px 166px 197px 238px 114px; }
.batch .row b { text-align: right; padding-right: 17px; }
.audits .row { grid-template-columns: 197px 217px 205px 205px 197px; }
.batch .row.head span { margin: 0 -9px; }

/* windows behind Chrome */
.ff { position: absolute; left: 0; top: 1590px; width: 2764px; height: 98px; border-radius: 0 0 10px 10px; overflow: hidden; }
.ff-page { display: flex; position: relative; height: 45px; padding: 14px 30px 0 197px; background: linear-gradient(90deg, #fff6, #fff0 90px), linear-gradient(#838383 14px, #a5a5a5); }
.photo-a { width: 500px; height: 7px; background: linear-gradient(90deg, #7c5546, #5b3c31 28%, #1e1a1f 35%, #332b36 70%, #8c432a 80%, #a4502e); }
.photo-b { margin-left: 70px; }
.soft { filter: blur(3px); }
.ff-scroll { width: 30px; height: 31px; margin: 0 -30px 0 auto; border-left: 2px solid #8d8d8d; background: #fff3; }
.ff-bar { display: flex; align-items: center; height: 53px; padding: 0 18px 2px 14px; border: solid #7a5a10; border-width: 2px 0; background: linear-gradient(90deg, #ffd02c66, #0000 90px), linear-gradient(#ab9328, #d6a704); color: #111; font: 22px Inter, sans-serif; }
.ff-bar b { margin-left: 14px; font-size: 22.5px; letter-spacing: .15px; font-weight: 700; }
.ff-opt { width: 144px; height: 35px; margin-left: auto; border: 2px solid #7f7f7f; border-radius: 18px; background: #bdbdbd; font: 22px Inter, sans-serif; letter-spacing: 0; padding: 0; }
.ff-x { margin-left: 18px; }
.sidewin { position: absolute; left: 2764px; top: 1590px; width: 116px; height: 51px; padding: 14px 0 0 14px; border-radius: 0 0 10px 0; background: linear-gradient(#808080 14px, #b4b4b4); }
.notewin { position: absolute; left: 2764px; top: 1640px; width: 52px; height: 48px; padding: 8px 0 0; border-radius: 0 0 10px 0; background: linear-gradient(#6e6e6e, #9a9a9a); }
.desk-label { position: absolute; left: 2812px; top: 1673px; color: #d8d8d8; font: 24px/28px Inter, sans-serif; }

/* dock */
.dock { position: absolute; left: 74px; top: 1690px; width: 2732px; height: 110px; display: flex; padding-left: 6px; border-radius: 10px 10px 0 0; background: linear-gradient(90deg, #50575e, #525b63 60%, #55555f); }
.app { position: relative; width: 92.400px; height: 110px; flex: none; }
.app > svg { width: 92px; height: 110px; }
.app.run::after { content: ""; position: absolute; left: 42px; top: 98px; width: 8px; height: 8px; border-radius: 50%; background: #000; }
.app em { position: absolute; left: 58px; top: 8px; width: 34px; height: 34px; border-radius: 17px; background: #d9353b; color: #fff; text-align: center; font: 20px/34px Inter, sans-serif; }
.app em.wide { left: 41px; width: 51px; letter-spacing: -1px; }
.sep { width: 2px; height: 82px; margin: 14px 17px 0 21px; background: #33373d; }
.inst { font: bold 8px "Liberation Sans", sans-serif; fill: #7a2e20; }
.boxg { font: bold 17px "Liberation Sans", sans-serif; fill: #5e3412; }
.vb { font: bold 6px "Liberation Sans", sans-serif; fill: #b9cbe0; }
.term { font: bold 17px "Liberation Mono", monospace; fill: #fff; }
.tiny { font: 9px "Liberation Sans", sans-serif; fill: #222; }
```
